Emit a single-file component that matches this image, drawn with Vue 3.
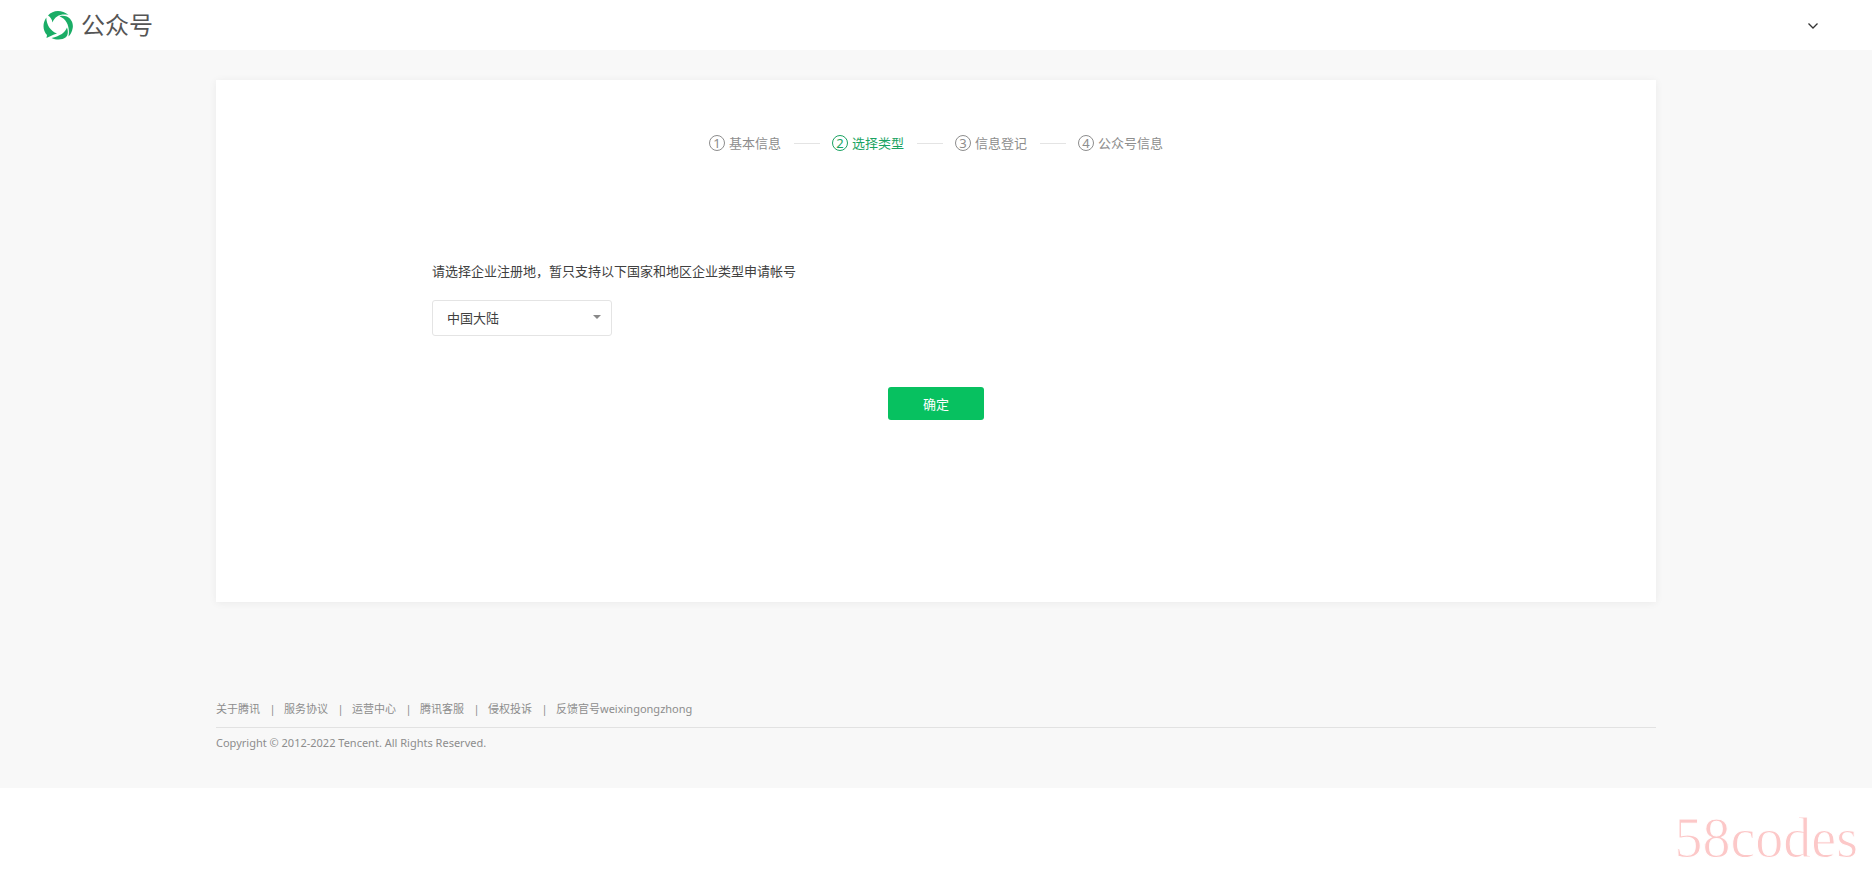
<script setup>
import { ref } from 'vue'

const steps = ['基本信息', '选择类型', '信息登记', '公众号信息']
const current = 1
const regions = ['中国大陆', '中国香港', '中国澳门', '中国台湾']
const region = ref('中国大陆')
const links = ['关于腾讯', '服务协议', '运营中心', '腾讯客服', '侵权投诉', '反馈官号weixingongzhong']
</script>

<template>
  <div class="page">
    <header class="header">
      <a href="#" class="brand">
        <svg class="logo" viewBox="0 0 30 30" aria-hidden="true">
          <path d="M5 5.500 C10 -0.500 19 -0.500 25.500 5 C18 3.500 12 6 9.500 12.500 C9 9.500 7.500 7 5 5.500 Z" />
          <path d="M16.500 6.300 C25 4 31 11 29.700 18 C29 22 27.500 24.500 25.500 26.500 C27 18 24.500 9.500 16.500 6.300 Z" />
          <path d="M3.300 7.500 C-1 14 0 21 4 25 L3.500 28 L11 24.500 C12.300 24.300 13 24 14 23.500 C7.500 21 3.500 15 3.300 7.500 Z" />
          <path d="M8.500 28 C14 30.500 20 29.500 22.500 27.500 C25 25.500 25.500 21.500 24 17.500 C22 22.500 17.500 26 8.500 28 Z" />
        </svg>
        <span class="brand-name">公众号</span>
      </a>
      <button class="account" type="button" aria-label="账号菜单">
        <svg viewBox="0 0 12 8" aria-hidden="true"><path d="M1.500 1.500 L6 6 L10.500 1.500" /></svg>
      </button>
    </header>

    <main class="card">
      <ol class="steps">
        <li v-for="(step, i) in steps" :key="step" class="step" :class="{ active: i === current }">
          <span class="step-number">{{ i + 1 }}</span>
          <span>{{ step }}</span>
        </li>
      </ol>
      <form class="form" @submit.prevent>
        <label class="prompt" for="region">请选择企业注册地，暂只支持以下国家和地区企业类型申请帐号</label>
        <div class="select-box">
          <select id="region" v-model="region">
            <option v-for="r in regions" :key="r">{{ r }}</option>
          </select>
        </div>
        <button class="submit" type="submit">确定</button>
      </form>
    </main>

    <footer class="footer">
      <nav class="links">
        <template v-for="(link, i) in links" :key="link">
          <span v-if="i" class="divider">|</span>
          <a href="#">{{ link }}</a>
        </template>
      </nav>
      <p class="copyright">Copyright © 2012-2022 Tencent. All Rights Reserved.</p>
    </footer>
  </div>
  <div class="watermark">58codes</div>
</template>

<style>
body {
  margin: 0;
  background: #fff;
}
</style>

<style scoped>
.page {
  background: #f8f8f8;
  font-family: "Noto Sans", "Noto Sans CJK SC", sans-serif;
  font-size: 13px;
  line-height: 20px;
  color: #404040;
}

.header {
  display: flex;
  align-items: center;
  justify-content: space-between;
  height: 50px;
  padding: 0 53px 0 43px;
  background: #fff;
}

.brand {
  display: flex;
  align-items: center;
  gap: 8px;
  color: #555;
  text-decoration: none;
}

.logo {
  width: 30px;
  height: 30px;
  fill: #1aad66;
}

.brand-name {
  font-size: 24px;
  line-height: 36px;
}

.account {
  display: flex;
  padding: 0;
  border: 0;
  background: none;
}

.account svg {
  width: 12px;
  height: 8px;
  margin-top: 2px;
  fill: none;
  stroke: #333;
  stroke-width: 1.3;
}

.card {
  box-sizing: border-box;
  max-width: 1440px;
  margin: 30px auto 0;
  padding: 53px 216px 182px;
  background: #fff;
  box-shadow: 0 1px 8px rgba(0, 0, 0, 0.06);
}

.steps {
  display: flex;
  justify-content: center;
  margin: 0;
  padding: 0;
  list-style: none;
  color: #8d8d8d;
}

.step {
  display: flex;
  align-items: center;
  gap: 4px;
}

.step + .step::before {
  content: "";
  width: 26px;
  height: 1px;
  margin: 0 8px 0 13px;
  background: #e4e4e4;
}

.step-number {
  box-sizing: border-box;
  width: 16px;
  height: 16px;
  border: 1px solid currentColor;
  border-radius: 50%;
  font-size: 13px;
  line-height: 14px;
  text-align: center;
}

.step.active {
  color: #1aa362;
}

.form {
  display: flex;
  flex-direction: column;
  align-items: flex-start;
  margin-top: 108px;
}

.select-box {
  position: relative;
  width: 180px;
  margin-top: 19px;
}

.select-box::after {
  content: "";
  position: absolute;
  top: 15px;
  right: 11px;
  border: 4px solid transparent;
  border-top-color: #888;
  border-bottom: 0;
  pointer-events: none;
}

.select-box select {
  display: block;
  box-sizing: border-box;
  width: 100%;
  height: 36px;
  padding: 0 32px 0 14px;
  border: 1px solid #e4e4e4;
  border-radius: 3px;
  background: #fff;
  color: inherit;
  font: inherit;
  appearance: none;
}

.submit {
  align-self: center;
  width: 96px;
  height: 33px;
  margin-top: 51px;
  padding: 0;
  border: 0;
  border-radius: 3px;
  background: #07c160;
  color: #fff;
  font: inherit;
}

.footer {
  max-width: 1440px;
  margin: 0 auto;
  padding: 97px 0 35px;
  font-size: 11px;
  color: #8d8d8d;
}

.links {
  display: flex;
  padding-bottom: 8px;
  border-bottom: 1px solid #e2e2e2;
}

.links a {
  color: inherit;
  text-decoration: none;
}

.divider {
  width: 24px;
  padding-left: 1px;
  box-sizing: border-box;
  text-align: center;
}

.copyright {
  margin: 5px 0 0;
}

.watermark {
  padding: 18px 14px 0 0;
  color: #fcc8c8;
  font: 56px/64px "Liberation Serif", serif;
  text-align: right;
  -webkit-text-stroke: 1px #fff;
}
</style>
